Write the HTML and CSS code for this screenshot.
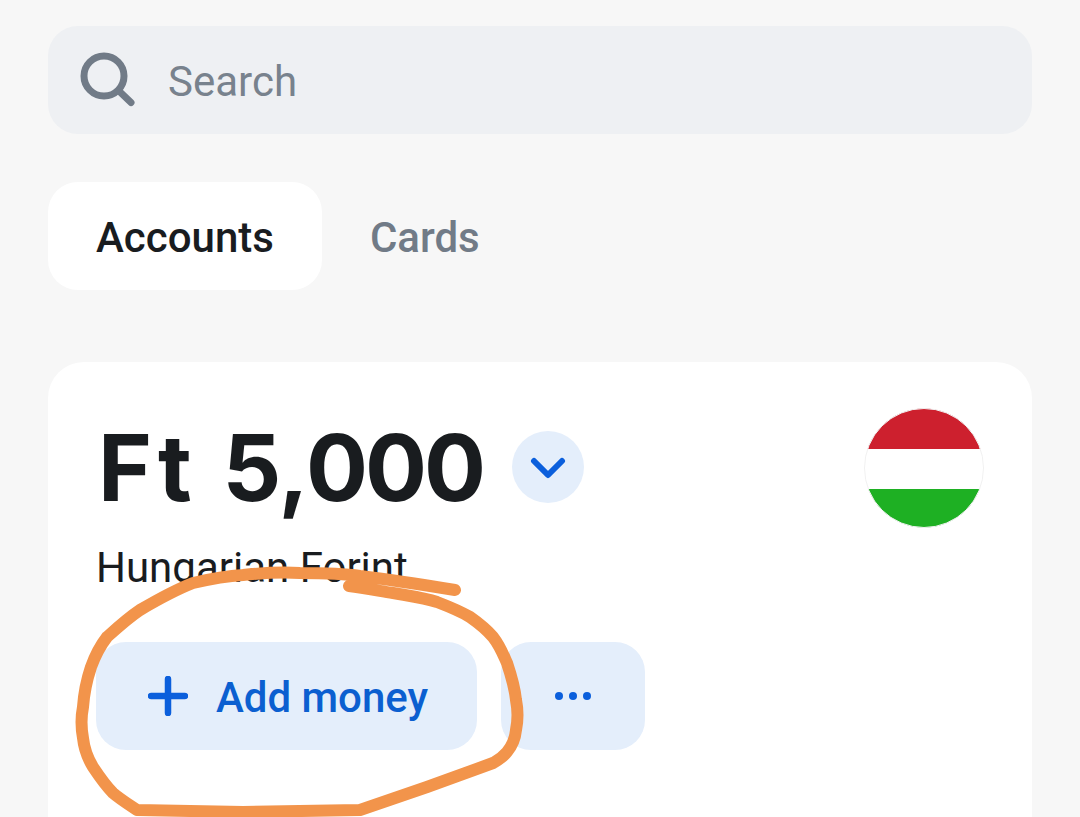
FILE: index.html
```html
<!DOCTYPE html>
<html lang="en">
<head>
<meta charset="utf-8">
<title>Accounts</title>
<link rel="stylesheet" href="styles.css">
</head>
<body>
<main class="screen">
  <div class="search">
    <svg class="search-icon" viewBox="0 0 56 56" aria-hidden="true"><circle cx="24" cy="24" r="20"/><path d="M39 39 L51 50.5"/></svg>
    <span class="search-text">Search</span>
  </div>
  <nav class="tabs">
    <span class="tab tab-active">Accounts</span>
    <span class="tab">Cards</span>
  </nav>
  <section class="card">
    <div class="card-head">
      <div class="balance">
        <span class="amount"><span class="amount-unit">Ft</span> <span class="amount-value">5,000</span></span>
        <span class="chevron-btn">
          <svg class="chevron" viewBox="0 0 36 24" aria-hidden="true"><path d="M4 6 L18 20 L32 6"/></svg>
        </span>
      </div>
      <svg class="flag" viewBox="0 0 120 120" aria-hidden="true">
        <defs><clipPath id="flag-clip"><circle cx="60" cy="60" r="59.5"/></clipPath></defs>
        <g clip-path="url(#flag-clip)">
          <rect class="flag-red" width="120" height="41"/>
          <rect class="flag-white" y="41" width="120" height="40"/>
          <rect class="flag-green" y="81" width="120" height="39"/>
        </g>
        <circle class="flag-rim" cx="60" cy="60" r="59.5"/>
      </svg>
    </div>
    <div class="currency">Hungarian Forint</div>
    <div class="actions">
      <button class="btn btn-add">
        <svg class="plus" viewBox="0 0 40 40" aria-hidden="true"><path d="M20 3 V37 M3 20 H37"/></svg>
        <span class="btn-label">Add money</span>
      </button>
      <button class="btn btn-more" aria-label="More">
        <svg class="dots" viewBox="0 0 40 10" aria-hidden="true"><circle cx="6" cy="5" r="4"/><circle cx="20" cy="5" r="4"/><circle cx="34" cy="5" r="4"/></svg>
      </button>
    </div>
  </section>
  <svg class="scribble" viewBox="0 0 1080 817" aria-hidden="true">
    <path d="M349 586 C365 588 380 591 393 593 C410 596 425 598 437 602 C450 607 460 611 470 617 C480 624 487 630 493 637 C500 646 503 654 507 663 C512 678 515 690 516 700 C518 710 518 720 516 730 C515 740 512 746 507 752 C502 758 498 760 493 763 L427 787 L360 810 L243 812 L137 810 C128 804 120 799 113 793 C105 785 99 776 93 767 C87 757 84 748 83 738 C81 727 81 717 83 707 C84 693 87 679 91 667 C95 656 100 646 107 637 C117 628 128 618 140 610 C157 600 175 590 193 583 C210 579 226 576 243 575 C262 573 281 572 300 573 C320 573 340 573 360 576 C392 580 424 585 455 590"/>
  </svg>
</main>
</body>
</html>
```
FILE: styles.css
```css
html, body {
  margin: 0;
  padding: 0;
  height: 817px;
  overflow: hidden;
  background: #f7f7f7;
}

.screen {
  position: relative;
  box-sizing: border-box;
  height: 817px;
  padding: 26px 48px 0;
  overflow: hidden;
  font-family: Roboto, "Liberation Sans", sans-serif;
  color: #191c1f;
}

.search {
  display: flex;
  align-items: center;
  height: 108px;
  padding-left: 32px;
  border-radius: 30px;
  background: #eef0f3;
}

.search-icon {
  width: 56px;
  height: 56px;
  margin-right: 32px;
  fill: none;
  stroke: #717b87;
  stroke-width: 7;
  stroke-linecap: round;
}

.search-text {
  padding-top: 2px;
  font-size: 42px;
  color: #78828d;
}

.tabs {
  display: flex;
  margin-top: 48px;
}

.tab {
  display: flex;
  align-items: center;
  box-sizing: border-box;
  height: 108px;
  padding: 2px 48px 0;
  border-radius: 30px;
  font-size: 42px;
  font-weight: 500;
  color: #717b87;
}

.tab-active {
  background: #fff;
  color: #191c1f;
}

.card {
  box-sizing: border-box;
  height: 600px;
  margin-top: 72px;
  padding: 46px 48px 0;
  border-radius: 36px;
  background: #fff;
}

.card-head {
  display: flex;
  justify-content: space-between;
  align-items: flex-start;
}

.balance {
  display: flex;
  align-items: center;
  height: 120px;
}

.amount {
  margin-left: 2px;
  font-family: Inter, "Liberation Sans", sans-serif;
  font-size: 92px;
  font-weight: 700;
  font-kerning: none;
  line-height: 120px;
  color: #191c1f;
}

.amount-unit {
  margin-right: 3px;
  letter-spacing: 6px;
}

.amount-value {
  letter-spacing: -3px;
}

.chevron-btn {
  display: flex;
  align-items: center;
  justify-content: center;
  width: 72px;
  height: 72px;
  margin: -2px 0 0 29px;
  border-radius: 50%;
  background: #e4eefb;
}

.chevron {
  width: 36px;
  height: 24px;
  fill: none;
  stroke: #0b5fdc;
  stroke-width: 6;
  stroke-linecap: round;
  stroke-linejoin: round;
}

.flag {
  width: 120px;
  height: 120px;
}

.flag-red { fill: #cd202e; }
.flag-white { fill: #fff; }
.flag-green { fill: #1eb023; }

.flag-rim {
  fill: none;
  stroke: #f1f1f1;
  stroke-width: 1;
}

.currency {
  margin-top: 12px;
  font-size: 42px;
  line-height: 56px;
}

.actions {
  display: flex;
  gap: 24px;
  margin-top: 46px;
}

.btn {
  display: flex;
  align-items: center;
  justify-content: center;
  height: 108px;
  border: 0;
  border-radius: 30px;
  padding: 0;
  background: #e4eefb;
  color: #0b5fd0;
  font-family: Roboto, "Liberation Sans", sans-serif;
  font-size: 42px;
  font-weight: 500;
}

.btn-add {
  width: 381px;
  padding-left: 3px;
  gap: 28px;
}

.btn-label {
  padding-top: 2px;
}

.btn-more {
  width: 144px;
}

.plus {
  width: 40px;
  height: 40px;
  fill: none;
  stroke: #0b5fdc;
  stroke-width: 6.5;
  stroke-linecap: round;
}

.dots {
  width: 40px;
  height: 10px;
  fill: #0b5fdc;
}

.scribble {
  position: absolute;
  top: 0;
  left: 0;
  width: 1080px;
  height: 817px;
  fill: none;
  stroke: #f2944b;
  stroke-width: 12;
  stroke-linecap: round;
  stroke-linejoin: round;
}
```
